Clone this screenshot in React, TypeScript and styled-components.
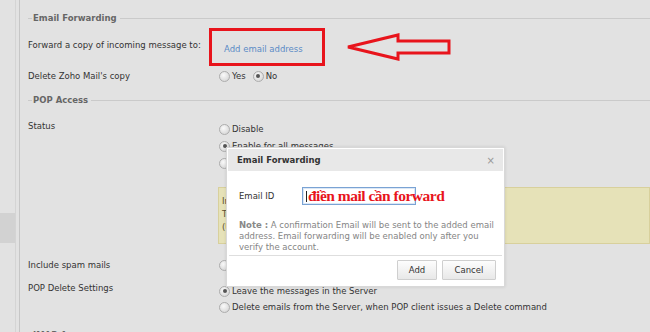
import styled, { createGlobalStyle } from "styled-components";

const GlobalStyle = createGlobalStyle`
  html, body {
    margin: 0;
    padding: 0;
    background: #e2e2e2;
    overflow: hidden;
  }
  body {
    font-family: "DejaVu Sans", Verdana, sans-serif;
    font-size: 8.5px;
    color: #333;
  }
`;

const Page = styled.div`
  position: relative;
  display: flex;
  width: 650px;
  height: 332px;
  overflow: hidden;
  background: #e2e2e2;
`;

const Sidebar = styled.div`
  width: 15px;
  flex-shrink: 0;
  padding-top: 213px;
  border-right: 1px solid #d4d4d4;
`;

const SidebarItem = styled.div`
  height: 30px;
  background: #d2d2d2;
`;

const Divider = styled.div`
  width: 1px;
  margin-left: 3px;
  background: #c6c6c6;
  flex-shrink: 0;
`;

const Main = styled.div`
  flex: 1;
  padding-left: 8px;
`;

const SectionHeader = styled.div<{ $top: number }>`
  display: flex;
  align-items: center;
  height: 14px;
  margin-top: ${(p) => p.$top}px;
  color: #666;
  font-weight: bold;
  font-size: 8.5px;

  &::before {
    content: "";
    width: 4px;
    border-top: 1px solid #cacaca;
  }
  &::after {
    content: "";
    flex: 1;
    border-top: 1px solid #cacaca;
  }
`;

const HeaderText = styled.span`
  padding: 0 3px 0 1px;
`;

const Row = styled.div<{ $top: number }>`
  display: grid;
  grid-template-columns: 191px 1fr;
  margin-top: ${(p) => p.$top}px;
  line-height: 12px;
`;

const Label = styled.div<{ $pad?: number }>`
  padding-top: ${(p) => p.$pad ?? 0}px;
  white-space: nowrap;
`;

const Value = styled.div<{ $pad?: number; $gap?: number }>`
  display: flex;
  flex-direction: column;
  gap: ${(p) => p.$gap ?? 0}px;
  padding-top: ${(p) => p.$pad ?? 0}px;
`;

const Inline = styled.div`
  display: flex;
  gap: 7px;
`;

const HighlightBox = styled.div`
  margin-left: -10px;
  width: 116px;
  height: 38px;
  box-sizing: border-box;
  border: 3px solid #e8141c;
  padding: 12px 0 0 12px;
`;

const Link = styled.a`
  color: #5b8cc6;
  text-decoration: none;
`;

const RadioItem = styled.label`
  display: flex;
  align-items: center;
  gap: 2px;
  white-space: nowrap;
  height: 12px;
`;

const RadioDot = styled.span<{ $checked?: boolean }>`
  position: relative;
  width: 9px;
  height: 9px;
  border-radius: 50%;
  border: 1px solid #adadad;
  background: radial-gradient(circle at 40% 35%, #fafafa, #cfcfcf);
  flex-shrink: 0;

  &::after {
    content: "";
    display: ${(p) => (p.$checked ? "block" : "none")};
    position: absolute;
    left: 2.5px;
    top: 2.5px;
    width: 4px;
    height: 4px;
    border-radius: 50%;
    background: #555;
  }
`;

const Notice = styled.div`
  margin-top: 13px;
  margin-left: -1px;
  height: 57px;
  box-sizing: border-box;
  background: #e6e2b8;
  border: 1px solid #d8d09c;
  padding: 7px 3px;
  color: #5a5030;
  line-height: 13px;
  white-space: nowrap;
`;

const Arrow = styled.svg`
  position: absolute;
  left: 343px;
  top: 31px;
`;

const Dialog = styled.div`
  position: absolute;
  left: 226px;
  top: 147px;
  width: 279px;
  height: 140px;
  box-sizing: border-box;
  background: #fff;
  border: 1px solid #d8d8d8;
  box-shadow: 0 0 3px rgba(0, 0, 0, 0.12);
  padding: 1px;
  display: flex;
  flex-direction: column;
`;

const DialogHeader = styled.div`
  display: flex;
  align-items: center;
  justify-content: space-between;
  height: 22px;
  flex-shrink: 0;
  background: #e8e8e8;
  padding: 0 8px 0 9px;
  font-weight: bold;
  font-size: 8.5px;
  color: #333;
`;

const Close = styled.span`
  color: #999;
  font-weight: normal;
  font-size: 10px;
`;

const DialogBody = styled.div`
  flex: 1;
  padding: 16px 4px 0 11px;
`;

const Field = styled.div`
  display: flex;
  align-items: center;
  height: 18px;
`;

const FieldLabel = styled.div`
  width: 63px;
`;

const InputBox = styled.div`
  position: relative;
  width: 114px;
  height: 18px;
  box-sizing: border-box;
  border: 1px solid #7aa3d4;
  box-shadow: inset 0 0 0 1px #dbe7f5;
`;

const Caret = styled.span`
  position: absolute;
  left: 3px;
  top: 3px;
  width: 1px;
  height: 11px;
  background: #222;
`;

const Scribble = styled.span`
  position: absolute;
  left: 5px;
  top: 0;
  white-space: nowrap;
  font-family: "Liberation Serif", "Times New Roman", serif;
  font-weight: bold;
  font-size: 15.5px;
  line-height: 15px;
  letter-spacing: -0.5px;
  color: #e8141c;
`;

const NoteText = styled.p`
  margin: 15px 0 0;
  color: #858585;
  line-height: 11px;
  white-space: nowrap;
`;

const NoteLabel = styled.b`
  color: #888;
`;

const DialogFooter = styled.div`
  display: flex;
  justify-content: flex-end;
  gap: 5px;
  flex-shrink: 0;
  border-top: 1px solid #dedede;
  margin: 0 1px;
  padding: 4px 6px 5px 0;
`;

const Button = styled.button<{ $w: number }>`
  width: ${(p) => p.$w}px;
  height: 20px;
  font-family: inherit;
  font-size: 8.5px;
  color: #333;
  border: 1px solid #cfcfcf;
  border-radius: 1px;
  background: linear-gradient(#fdfdfd, #e8e8e8);
  padding: 0;
`;

const Radio = ({ label, checked }: { label: string; checked?: boolean }) => (
  <RadioItem>
    <RadioDot $checked={checked} />
    {label}
  </RadioItem>
);

export default function App() {
  return (
    <>
      <GlobalStyle />
      <Page>
        <Sidebar>
          <SidebarItem />
        </Sidebar>
        <Divider />
        <Main>
          <SectionHeader $top={11}>
            <HeaderText>Email Forwarding</HeaderText>
          </SectionHeader>
          <Row $top={3}>
            <Label $pad={11}>Forward a copy of incoming message to:</Label>
            <Value>
              <HighlightBox>
                <Link href="#">Add email address</Link>
              </HighlightBox>
            </Value>
          </Row>
          <Row $top={4}>
            <Label>Delete Zoho Mail's copy</Label>
            <Inline>
              <Radio label="Yes" />
              <Radio label="No" checked />
            </Inline>
          </Row>
          <SectionHeader $top={11}>
            <HeaderText>POP Access</HeaderText>
          </SectionHeader>
          <Row $top={13}>
            <Label>Status</Label>
            <Value $pad={3} $gap={5}>
              <Radio label="Disable" />
              <Radio label="Enable for all messages" checked />
              <Radio label="Enable for messages that arrive from now on" />
              <Notice>
                Incoming Server : pop.zoho.com
                <br />
                Type : POP &nbsp; Port : 995 &nbsp; SSL : Enabled
                <br />
                (Use your Zoho Mail account credentials)
              </Notice>
            </Value>
          </Row>
          <Row $top={15}>
            <Label>Include spam mails</Label>
            <Radio label="" />
          </Row>
          <Row $top={11}>
            <Label>POP Delete Settings</Label>
            <Value $pad={3} $gap={4}>
              <Radio label="Leave the messages in the Server" checked />
              <Radio label="Delete emails from the Server, when POP client issues a Delete command" />
            </Value>
          </Row>
          <SectionHeader $top={15}>
            <HeaderText>IMAP Access</HeaderText>
          </SectionHeader>
        </Main>

        <Arrow width="112" height="32" viewBox="343 31 112 32">
          <polygon
            points="348,47 398,35 398,41 449,41 449,53 398,53 398,59"
            fill="none"
            stroke="#e8141c"
            strokeWidth="3"
            strokeLinejoin="miter"
          />
        </Arrow>

        <Dialog>
          <DialogHeader>
            Email Forwarding
            <Close>×</Close>
          </DialogHeader>
          <DialogBody>
            <Field>
              <FieldLabel>Email ID</FieldLabel>
              <InputBox>
                <Caret />
                <Scribble>điền mail cần forward</Scribble>
              </InputBox>
            </Field>
            <NoteText>
              <NoteLabel>Note :</NoteLabel> A confirmation Email will be sent to the added email
              <br />
              address. Email forwarding will be enabled only after you
              <br />
              verify the account.
            </NoteText>
          </DialogBody>
          <DialogFooter>
            <Button $w={40}>Add</Button>
            <Button $w={54}>Cancel</Button>
          </DialogFooter>
        </Dialog>
      </Page>
    </>
  );
}
